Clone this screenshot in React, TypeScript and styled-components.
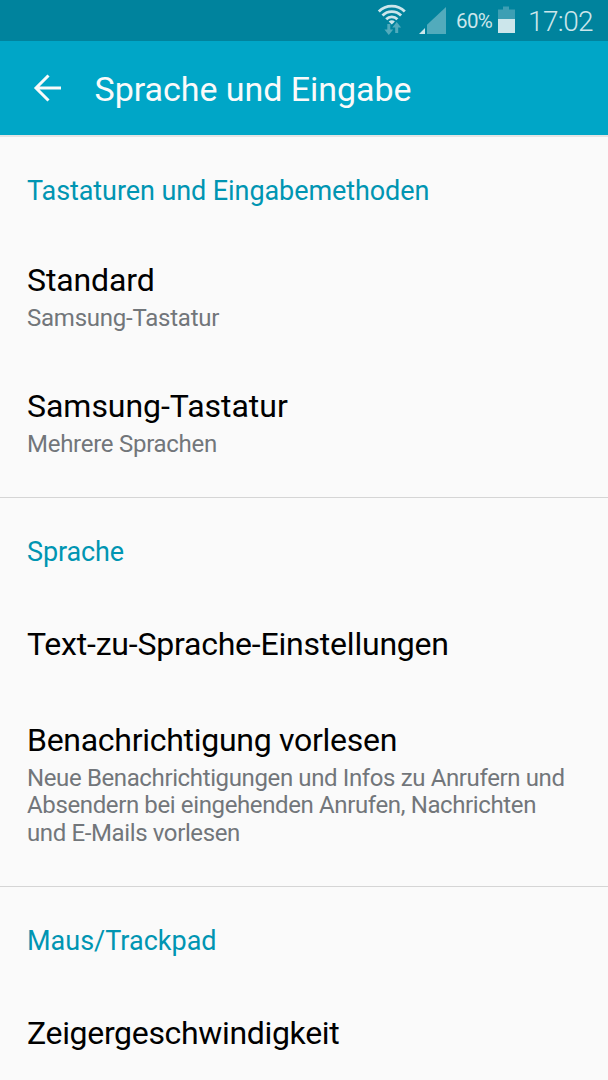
import React from "react";
import styled, { createGlobalStyle } from "styled-components";

const GlobalStyle = createGlobalStyle`
  * { box-sizing: border-box; }
  body {
    margin: 0;
    background: #fafafa;
    font-family: Roboto, "Liberation Sans", sans-serif;
    overflow: hidden;
  }
`;

const Screen = styled.div`
  width: 608px;
  height: 1080px;
  overflow: hidden;
  display: flex;
  flex-direction: column;
  background: #fafafa;
`;

const StatusBar = styled.div`
  height: 41px;
  flex: none;
  display: flex;
  justify-content: flex-end;
  align-items: flex-start;
  padding-right: 14px;
  background: #00839d;
  color: #cce6eb;
`;

const StatusIcons = styled.svg`
  display: block;
  width: 78px;
  height: 40px;
`;

const BatteryIcon = styled.svg`
  display: block;
  width: 18px;
  height: 40px;
  margin: 0 12px 0 5px;
`;

const Percent = styled.span`
  font-size: 20.5px;
  line-height: 43px;
  font-weight: 400;
  letter-spacing: -0.6px;
  padding-left: 1px;
  width: 38px;
  white-space: nowrap;
`;

const Clock = styled.span`
  font-size: 28px;
  line-height: 43px;
  font-weight: 300;
  letter-spacing: -0.6px;
  width: 66px;
  white-space: nowrap;
`;

const AppBar = styled.header`
  height: 94px;
  flex: none;
  display: flex;
  align-items: center;
  padding-left: 33px;
  background: #00a6c7;
  color: #fafafa;
`;

const BackIcon = styled.svg`
  display: block;
  width: 30px;
  height: 28px;
  margin-right: 31.5px;
`;

const Title = styled.h1`
  margin: 1px 0 0;
  font-size: 34px;
  line-height: 40px;
  font-weight: 400;
  letter-spacing: -0.04px;
  white-space: nowrap;
`;

const Content = styled.main`
  border-top: 2px solid #e4e4e4;
`;

const Section = styled.section`
  padding-bottom: 11px;
  border-bottom: 1px solid #d5d5d5;
`;

const SectionTitle = styled.h2<{ $tracking: number }>`
  margin: 0;
  height: 97px;
  padding: 38px 27px 0;
  font-size: 27px;
  line-height: 32px;
  font-weight: 400;
  letter-spacing: ${(p) => p.$tracking}px;
  color: #0095b2;
`;

const Row = styled.div`
  min-height: 99px;
  padding: 27px 27px 28px;
  display: flex;
  flex-direction: column;
  justify-content: center;
`;

const RowTitle = styled.div<{ $tracking: number }>`
  font-size: 32px;
  line-height: 38px;
  letter-spacing: ${(p) => p.$tracking}px;
  color: #000;
  white-space: nowrap;
`;

const Summary = styled.div<{ $tracking: number }>`
  margin-top: 5.5px;
  font-size: 24px;
  line-height: 27.5px;
  letter-spacing: ${(p) => p.$tracking}px;
  white-space: nowrap;
  color: #72767a;
`;

type Item = {
  title: string;
  tracking: number;
  lines?: string[];
  summaryTracking?: number;
};

const sections: { title: string; tracking: number; items: Item[] }[] = [
  {
    title: "Tastaturen und Eingabemethoden",
    tracking: -0.08,
    items: [
      {
        title: "Standard",
        tracking: -0.12,
        lines: ["Samsung-Tastatur"],
        summaryTracking: -0.23,
      },
      {
        title: "Samsung-Tastatur",
        tracking: -0.03,
        lines: ["Mehrere Sprachen"],
        summaryTracking: -0.27,
      },
    ],
  },
  {
    title: "Sprache",
    tracking: -0.12,
    items: [
      { title: "Text-zu-Sprache-Einstellungen", tracking: -0.21 },
      {
        title: "Benachrichtigung vorlesen",
        tracking: -0.28,
        lines: [
          "Neue Benachrichtigungen und Infos zu Anrufern und",
          "Absendern bei eingehenden Anrufen, Nachrichten",
          "und E-Mails vorlesen",
        ],
        summaryTracking: -0.375,
      },
    ],
  },
  {
    title: "Maus/Trackpad",
    tracking: 0,
    items: [{ title: "Zeigergeschwindigkeit", tracking: -0.33 }],
  },
];

export default function App() {
  return (
    <Screen>
      <GlobalStyle />
      <StatusBar>
        <StatusIcons viewBox="377 0 78 40">
          <g fill="#52abbc">
            <path d="M387.3 24h3v5.400h2.900l-4.400 5.500-4.400-5.500h2.900z" />
            <path d="M395.200 33h3v-5.400h2.900l-4.400-5.500-4.400 5.500h2.900z" />
            <path d="M446 7v27h-19v-9.200z" />
          </g>
          <g fill="none" stroke="#cce6eb" strokeWidth="2.800">
            <path d="M378.800 11.600a18.400 18.400 0 0 1 26 0" />
            <path d="M382.500 15.500a13 13 0 0 1 18.600 0" />
            <path d="M386.200 19.300a7.900 7.900 0 0 1 11.200 0" />
          </g>
          <path d="M388.700 21.600a4.600 4.600 0 0 1 6.200 0l-3.100 3z" fill="#cce6eb" />
          <path d="M425 28v6h-6z" fill="#cce6eb" />
        </StatusIcons>
        <Percent>60%</Percent>
        <BatteryIcon viewBox="0 0 18 40">
          <path d="M0 9.500h5V6.500h6v3h6V20H0z" fill="#3d9fb4" />
          <path d="M0 19h17v14H0z" fill="#cce6eb" />
        </BatteryIcon>
        <Clock>17:02</Clock>
      </StatusBar>
      <AppBar>
        <BackIcon viewBox="0 0 30 28" fill="none" stroke="#fafafa" strokeWidth="3">
          <path d="M28 14H3M15.500 1.500 3 14l12.500 12.500" />
        </BackIcon>
        <Title>Sprache und Eingabe</Title>
      </AppBar>
      <Content>
        {sections.map((section) => (
          <Section key={section.title}>
            <SectionTitle $tracking={section.tracking}>{section.title}</SectionTitle>
            {section.items.map((item) => (
              <Row key={item.title}>
                <RowTitle $tracking={item.tracking}>{item.title}</RowTitle>
                {item.lines && (
                  <Summary $tracking={item.summaryTracking ?? 0}>
                    {item.lines.map((line) => (
                      <div key={line}>{line}</div>
                    ))}
                  </Summary>
                )}
              </Row>
            ))}
          </Section>
        ))}
      </Content>
    </Screen>
  );
}
